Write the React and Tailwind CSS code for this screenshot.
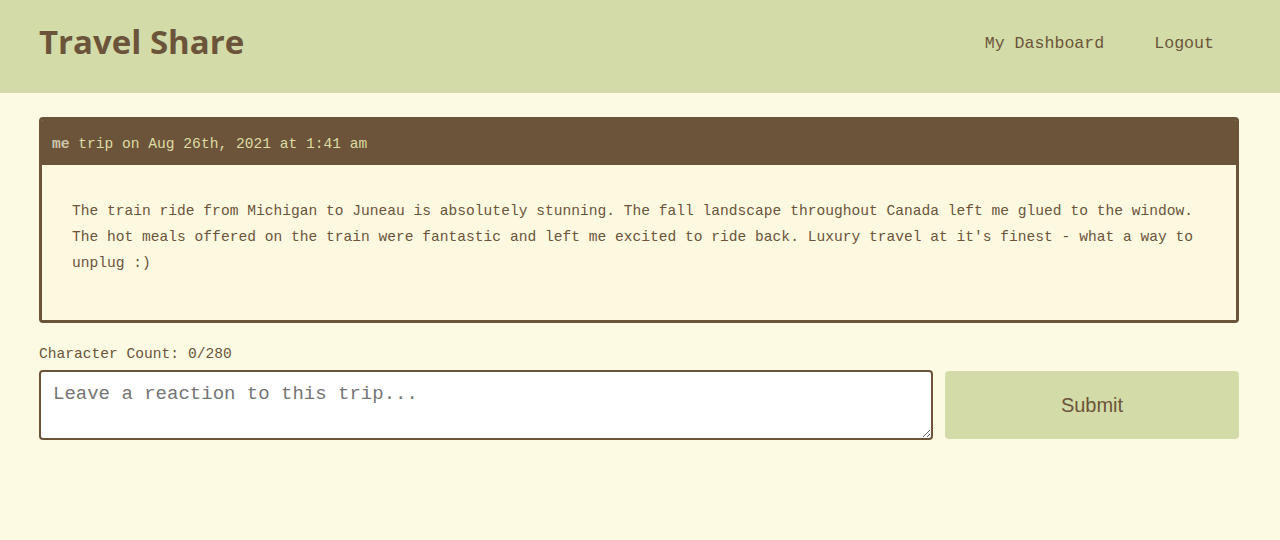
export default function App() {
  const mono = { fontFamily: '"Liberation Mono", "DejaVu Sans Mono", monospace' };
  return (
    <div className="min-h-[540px] bg-[#fdfae4]" style={mono}>
      <header className="h-[93px] bg-[#d3dca8] flex items-center justify-between pl-[39px] pr-[41px] pb-[6px]">
        <h1
          className="text-[33px] font-bold text-[#6b5439] leading-none mb-[5px]"
          style={{ fontFamily: '"Open Sans", Lato, sans-serif' }}
        >
          Travel Share
        </h1>
        <nav className="flex text-[16.6px] text-[#6b5439] pt-[2px]">
          <a className="px-[25px]">My Dashboard</a>
          <a className="px-[25px]">Logout</a>
        </nav>
      </header>
      <main className="pl-[39px] pr-[41px] pt-[24px]">
        <div className="border-[3px] border-[#6b5439] rounded-[4px] overflow-hidden">
          <div className="bg-[#6b5439] h-[45px] flex items-center px-[10px] pt-[4px] text-[14.6px] text-[#dedca2]">
            <span className="font-bold text-[#cfc6ae]">me</span>
            <span>&nbsp;trip on Aug 26th, 2021 at 1:41 am</span>
          </div>
          <div className="bg-[#fdf9e1] pt-[33px] pb-[44px] px-[30px] text-[14.6px] leading-[26px] text-[#6b5439]">
            <p>
              The train ride from Michigan to Juneau is absolutely stunning. The fall landscape throughout Canada left me glued to the window. The hot meals offered on the train were fantastic and left me excited to ride back. Luxury travel at it's finest - what a way to unplug :)
            </p>
          </div>
        </div>
        <div className="mt-[22px] text-[14.6px] leading-[18px] text-[#6b5439]">Character Count: 0/280</div>
        <div className="mt-[7px] flex gap-[12px] items-center">
          <textarea
            placeholder="Leave a reaction to this trip..."
            className="w-[894px] h-[70px] bg-white border-2 border-[#6b5439] rounded-[4px] px-[12px] py-[10px] text-[19px] leading-[24px] placeholder:text-[#757575] outline-none"
            style={{ fontFamily: '"Courier New", "Liberation Mono", monospace' }}
          />
          <button
            className="flex-1 h-[68px] bg-[#d3dca8] rounded-[4px] text-[20px] text-[#6b5439]"
            style={{ fontFamily: '"Liberation Sans", Arial, sans-serif' }}
          >
            Submit
          </button>
        </div>
      </main>
    </div>
  );
}
